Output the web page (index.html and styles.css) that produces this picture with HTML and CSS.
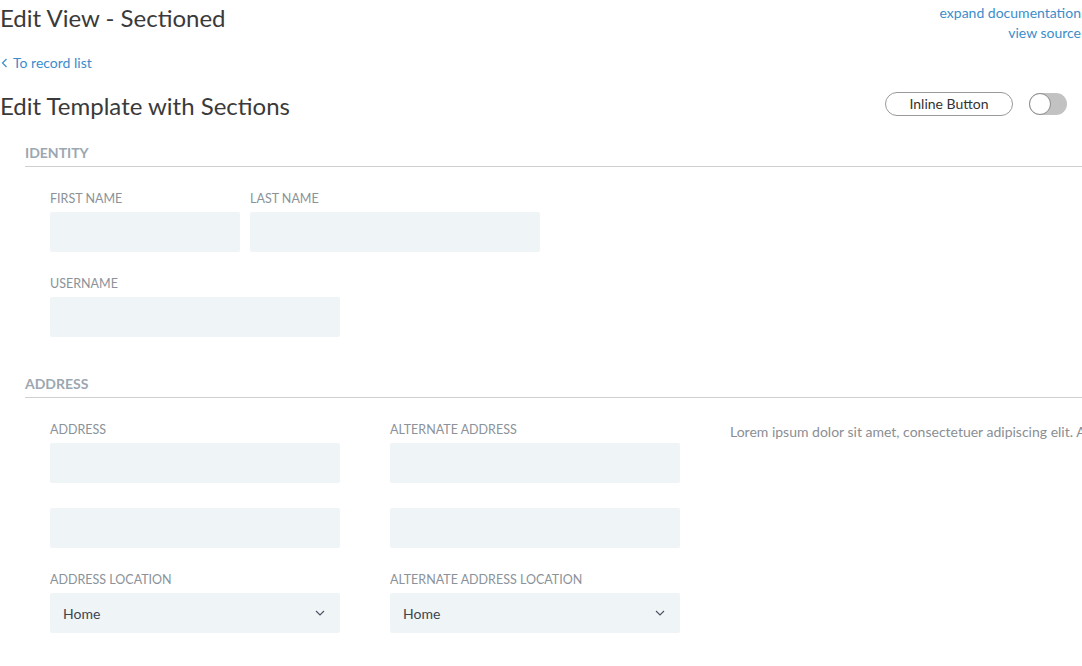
FILE: index.html
```
<!DOCTYPE html>
<html lang="en">
<head>
<meta charset="utf-8">
<title>Edit View - Sectioned</title>
<link rel="stylesheet" href="styles.css">
</head>
<body>
<div class="page">
  <header class="top">
    <h1 class="page-title">Edit View - Sectioned</h1>
    <div class="doc-links">
      <a href="#" class="link">expand documentation</a>
      <a href="#" class="link">view source</a>
    </div>
  </header>
  <a href="#" class="back link">
    <svg class="back-icon" width="7" height="10" viewBox="0 0 7 10"><path d="M5.5 1 L1.5 5 L5.5 9" fill="none" stroke="currentColor" stroke-width="1.2"/></svg>
    To record list
  </a>
  <div class="form-head">
    <h2 class="form-title">Edit Template with Sections</h2>
    <div class="form-actions">
      <button class="pill">Inline Button</button>
      <span class="toggle"><span class="knob"></span></span>
    </div>
  </div>

  <section class="section">
    <h3 class="section-title">IDENTITY</h3>
    <div class="section-body">
      <div class="row">
        <div class="field">
          <label class="label">FIRST NAME</label>
          <div class="input w190"></div>
        </div>
        <div class="field">
          <label class="label">LAST NAME</label>
          <div class="input w290"></div>
        </div>
      </div>
      <div class="field">
        <label class="label">USERNAME</label>
        <div class="input w290"></div>
      </div>
    </div>
  </section>

  <section class="section">
    <h3 class="section-title">ADDRESS</h3>
    <div class="section-body cols">
      <div class="col">
        <div class="field">
          <label class="label">ADDRESS</label>
          <div class="input w290"></div>
          <div class="input w290 extra"></div>
        </div>
        <div class="field">
          <label class="label">ADDRESS LOCATION</label>
          <div class="input w290 select"><span>Home</span>
            <svg width="10" height="6" viewBox="0 0 10 6"><path d="M1 1 L5 5 L9 1" fill="none" stroke="currentColor" stroke-width="1.1"/></svg>
          </div>
        </div>
      </div>
      <div class="col">
        <div class="field">
          <label class="label">ALTERNATE ADDRESS</label>
          <div class="input w290"></div>
          <div class="input w290 extra"></div>
        </div>
        <div class="field">
          <label class="label">ALTERNATE ADDRESS LOCATION</label>
          <div class="input w290 select"><span>Home</span>
            <svg width="10" height="6" viewBox="0 0 10 6"><path d="M1 1 L5 5 L9 1" fill="none" stroke="currentColor" stroke-width="1.1"/></svg>
          </div>
        </div>
      </div>
      <p class="lorem">Lorem ipsum dolor sit amet, consectetuer adipiscing elit. Aenean commodo ligula eget dolor. Aenean massa.</p>
    </div>
  </section>
</div>
</body>
</html>
```
FILE: styles.css
```
html, body {
  margin: 0;
  padding: 0;
  background: #ffffff;
  overflow: hidden;
}
body {
  font-family: Lato, "Open Sans", "Liberation Sans", sans-serif;
  color: #3c3c3c;
}
.page {
  width: 1082px;
}
.top {
  display: flex;
  justify-content: space-between;
  align-items: flex-start;
}
.page-title {
  margin: 3px 0 0;
  font-size: 24px;
  font-weight: 400;
  line-height: 30px;
  color: #3a3a3a;
}
.doc-links {
  display: flex;
  flex-direction: column;
  align-items: flex-end;
  padding-top: 3px;
  padding-right: 1px;
}
.link {
  color: #3b8dcb;
  text-decoration: none;
  font-size: 14px;
  line-height: 20px;
}
.back {
  display: flex;
  align-items: center;
  gap: 5px;
  margin-top: 12px;
  line-height: 16px;
  padding-left: 1px;
  width: max-content;
}
.form-head {
  display: flex;
  justify-content: space-between;
  align-items: center;
  margin-top: 20px;
  height: 30px;
}
.form-title {
  margin: 0;
  font-size: 24px;
  font-weight: 400;
  line-height: 30px;
  color: #3a3a3a;
}
.form-actions {
  display: flex;
  align-items: center;
  gap: 16px;
  padding-right: 15px;
  margin-bottom: 5px;
}
.pill {
  width: 128px;
  height: 24px;
  border: 1px solid #9a9a9a;
  border-radius: 12px;
  background: #fff;
  font-family: inherit;
  font-size: 14px;
  color: #333;
  padding: 0;
}
.toggle {
  display: block;
  width: 38px;
  height: 22px;
  border-radius: 11px;
  background: #c2c2c2;
  position: relative;
}
.knob {
  position: absolute;
  left: 0;
  top: 0;
  width: 20px;
  height: 20px;
  border-radius: 50%;
  background: #fff;
  border: 1px solid #8a8a8a;
}
.section {
  margin-left: 25px;
  margin-top: 24px;
}
.section + .section {
  margin-top: 39px;
}
.section-title {
  margin: 0;
  font-size: 14px;
  font-weight: 700;
  line-height: 16px;
  color: #9ba7b1;
  padding-bottom: 5px;
  border-bottom: 1px solid #cfcfcf;
}
.section-body {
  padding: 24px 0 0 25px;
}
.row {
  display: flex;
  gap: 10px;
}
.cols {
  display: flex;
  gap: 50px;
  align-items: flex-start;
}
.col {
  display: flex;
  flex-direction: column;
}
.field {
  margin-bottom: 24px;
}
.label {
  display: block;
  font-size: 12.5px;
  line-height: 16px;
  color: #8b9299;
  margin-bottom: 5px;
}
.input {
  height: 40px;
  background: #eff4f7;
  border-radius: 2px;
}
.w190 { width: 190px; }
.w290 { width: 290px; }
.extra { margin-top: 25px; }
.select {
  display: flex;
  align-items: center;
  justify-content: space-between;
  padding: 0 15px 0 13px;
  box-sizing: border-box;
  font-size: 14px;
  color: #3c4450;
}
.select svg { color: #4a5060; }
.lorem {
  margin: 0;
  padding-top: 2px;
  font-size: 14px;
  line-height: 16px;
  color: #8a8e93;
  white-space: nowrap;
}
```
